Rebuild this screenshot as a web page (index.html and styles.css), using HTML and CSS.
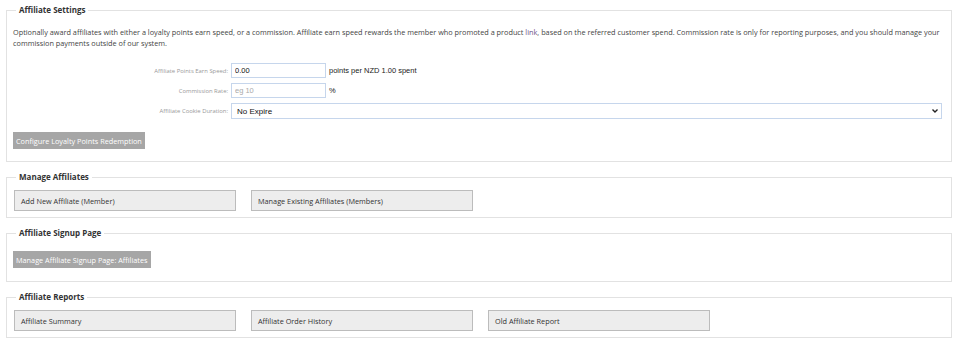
FILE: index.html
```html
<!DOCTYPE html>
<html lang="en">

<head>
    <meta charset="UTF-8">
    <meta name="viewport" content="width=device-width, initial-scale=1.0">
    <title>Affiliates</title>
    <link rel="stylesheet" href="styles.css">
</head>

<body>
    <!-- Affiliate Settings -->
    <fieldset class="panel panel-settings">
        <legend>Affiliate Settings</legend>
        <p class="intro">Optionally award affiliates with either a loyalty points earn speed, or a commission. Affiliate earn speed rewards the member who promoted a product <a href="#">link</a>, based on the referred customer spend. Commission rate is only for reporting purposes, and you should manage your commission payments outside of our system.</p>

        <div class="form-rows">
            <div class="form-row">
                <label for="earn-speed">Affiliate Points Earn Speed:</label>
                <input id="earn-speed" class="field field-short" type="text" value="0.00">
                <span class="suffix">points per NZD 1.00 spent</span>
            </div>
            <div class="form-row">
                <label for="commission">Commission Rate:</label>
                <input id="commission" class="field field-short" type="text" placeholder="eg 10">
                <span class="suffix">%</span>
            </div>
            <div class="form-row">
                <label for="cookie">Affiliate Cookie Duration:</label>
                <div class="select-wrap">
                    <select id="cookie" class="field field-select">
                        <option>No Expire</option>
                        <option>1 Day</option>
                        <option>7 Days</option>
                        <option>30 Days</option>
                    </select>
                    <svg class="select-arrow" width="6" height="4" viewBox="0 0 6 4">
                        <path d="M0.5 0.5 L3 3 L5.5 0.5" fill="none" stroke="#222" stroke-width="1.4"/>
                    </svg>
                </div>
            </div>
        </div>

        <button class="btn-dark">Configure Loyalty Points Redemption</button>
    </fieldset>

    <!-- Manage Affiliates -->
    <fieldset class="panel panel-links">
        <legend>Manage Affiliates</legend>
        <div class="link-row">
            <button class="btn-light">Add New Affiliate (Member)</button>
            <button class="btn-light">Manage Existing Affiliates (Members)</button>
        </div>
    </fieldset>

    <!-- Affiliate Signup Page -->
    <fieldset class="panel panel-signup">
        <legend>Affiliate Signup Page</legend>
        <button class="btn-dark">Manage Affiliate Signup Page: Affiliates</button>
    </fieldset>

    <!-- Affiliate Reports -->
    <fieldset class="panel panel-links">
        <legend>Affiliate Reports</legend>
        <div class="link-row">
            <button class="btn-light">Affiliate Summary</button>
            <button class="btn-light">Affiliate Order History</button>
            <button class="btn-light">Old Affiliate Report</button>
        </div>
    </fieldset>
</body>

</html>
```

FILE: styles.css
```css
body {
    font-family: "Open Sans", Arial, sans-serif;
    background: #fff;
    color: #444;
    margin: 5px 8px 0 6px;
}

.panel {
    border: 1px solid #e2e2e2;
    margin: 0 0 10px 0;
    padding: 0 6px 12px 6px;
    min-width: 0;
}

.panel legend {
    font-size: 8px;
    font-weight: bold;
    color: #333;
    padding: 0 3px;
    margin-left: 3px;
    line-height: 10px;
}

.intro {
    font-size: 7.3px;
    line-height: 11px;
    margin: 12px 0 14px 0;
    color: #444;
}

.intro a {
    color: #6a4f86;
    text-decoration: none;
}

.form-rows {
    display: flex;
    flex-direction: column;
    gap: 5px;
}

.form-row {
    display: flex;
    align-items: center;
}

.form-row label {
    width: 215px;
    text-align: right;
    font-size: 5.9px;
    color: #999;
    padding-right: 3px;
}

.field {
    font-family: "Liberation Sans", Arial, sans-serif;
    font-size: 7.5px;
    color: #111;
    border: 1px solid #c6d6ec;
    background: #fff;
    height: 15px;
    box-sizing: border-box;
    padding: 0 3px;
    margin: 0;
    outline: none;
}

.field::placeholder {
    color: #aaa;
}

.field-short {
    width: 95px;
}

.select-wrap {
    flex: 1;
    position: relative;
    display: flex;
    margin-right: 3px;
}

.field-select {
    flex: 1;
    height: 16px;
    font-size: 8px;
    padding: 0 5px;
    border-radius: 0;
    appearance: none;
    -webkit-appearance: none;
}

.select-arrow {
    position: absolute;
    right: 4px;
    top: 6px;
}

.suffix {
    font-family: "Liberation Sans", Arial, sans-serif;
    font-size: 7.5px;
    color: #222;
    margin-left: 3px;
}

.btn-dark {
    display: block;
    font-family: "Open Sans", Arial, sans-serif;
    font-size: 7.3px;
    color: #fff;
    background: #a6a6a6;
    border: none;
    height: 17px;
    padding: 0 3px;
    margin: 13px 0 0 0;
    cursor: pointer;
}

.panel-signup {
    padding-bottom: 13px;
}

.panel-signup .btn-dark {
    margin-top: 13px;
}

.link-row {
    display: flex;
    gap: 15px;
    padding: 8px 0 0 1px;
}

.btn-light {
    width: 222px;
    height: 21px;
    font-family: "Open Sans", Arial, sans-serif;
    font-size: 7.3px;
    color: #333;
    text-align: left;
    background: #ededed;
    border: 1px solid #bcbcbc;
    padding: 0 6px;
    cursor: pointer;
}

.panel-links {
    padding-bottom: 6px;
}
```
